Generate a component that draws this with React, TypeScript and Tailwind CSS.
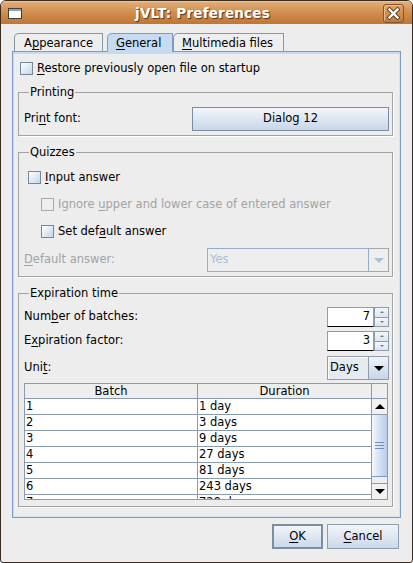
import React from 'react'

const U = ({ children }: { children: React.ReactNode }) => <span className="underline underline-offset-2">{children}</span>

function Check({ disabled }: { disabled?: boolean }) {
  return (
    <div
      className={
        disabled
          ? 'w-[13px] h-[13px] shrink-0 border border-[#a9a9a9] bg-[#eeeeee]'
          : 'w-[13px] h-[13px] shrink-0 border border-[#77879b] bg-gradient-to-br from-white to-[#c3d5eb]'
      }
    />
  )
}

function Spinner({ value }: { value: string }) {
  return (
    <div className="flex w-[62px] h-[20px]">
      <div className="flex-1 bg-white border border-[#8e9cad] border-b-black flex items-center justify-end pr-[3px]">{value}</div>
      <div className="w-[15px] flex flex-col">
        <div className="flex-1 border border-[#8e9cad] border-b-0 bg-gradient-to-b from-[#f4f7fb] to-[#dce5f0] flex items-center justify-center">
          <div className="w-0 h-0 border-x-[2px] border-x-transparent border-b-[2px] border-b-[#777]" />
        </div>
        <div className="flex-1 border border-[#8e9cad] bg-gradient-to-b from-[#f4f7fb] to-[#dce5f0] flex items-center justify-center">
          <div className="w-0 h-0 border-x-[2px] border-x-transparent border-t-[2px] border-t-[#777]" />
        </div>
      </div>
    </div>
  )
}

const rows = [
  ['1', '1 day'],
  ['2', '3 days'],
  ['3', '9 days'],
  ['4', '27 days'],
  ['5', '81 days'],
  ['6', '243 days'],
  ['7', '729 days'],
]

export default function App() {
  return (
    <div className="w-[413px] h-[563px] flex flex-col bg-[#ededed] border border-[#3a2c20] rounded-t-[6px] rounded-b-[3px] overflow-hidden font-['DejaVu_Sans',sans-serif] text-[11.5px] text-black">
      {/* title bar */}
      <div className="h-[23px] shrink-0 flex items-center px-[7px] bg-gradient-to-b from-[#e2ad76] via-[#cf8d4c] to-[#bf7636] border-t border-t-[#f0c596]">
        <div className="w-[14px] h-[11px] border border-[#3f3f3f] bg-white flex flex-col">
          <div className="h-[2px] bg-[#8fa0b8]" />
        </div>
        <div className="flex-1 text-center text-white font-bold text-[13.5px] [text-shadow:1px_1px_1px_#5a3414] tracking-[0.2px]">jVLT: Preferences</div>
        <div className="w-[21px] h-[19px] mr-[1px] rounded-[3px] border border-[#8a5324] bg-gradient-to-b from-[#dea36a] to-[#c27a3b] shadow-[inset_1px_1px_0_#ebbd8c] flex items-center justify-center">
          <svg width="13" height="13" viewBox="0 0 13 13">
            <path d="M2.5 2.5 L10.5 10.5 M10.5 2.5 L2.5 10.5" stroke="#5a3a1e" strokeWidth="4.2" strokeLinecap="square" />
            <path d="M2.5 2.5 L10.5 10.5 M10.5 2.5 L2.5 10.5" stroke="#ffffff" strokeWidth="2.4" strokeLinecap="square" />
          </svg>
        </div>
      </div>

      {/* body */}
      <div className="flex-1 flex flex-col px-[11px] pt-[9px]">
        {/* tabs */}
        <div className="h-[18px] flex items-end pl-[2px]">
          <div className="w-[89px] h-[18px] border border-b-0 border-[#8796a8] rounded-tl-[5px] bg-[#eeeeee] pl-[9px] pt-[1px] leading-[16px]">
            A<U>p</U>pearance
          </div>
          <div className="w-[66px] h-[19px] ml-[4px] -mb-[1px] border border-b-0 border-[#7f9bc6] rounded-tl-[5px] bg-[#c6dbf1] pl-[8px] pt-[1px] leading-[16px] z-10">
            <U>G</U>eneral
          </div>
          <div className="w-[111px] h-[18px] border border-b-0 border-[#8796a8] rounded-tl-[5px] bg-[#eeeeee] pl-[8px] pt-[1px] leading-[16px]">
            <U>M</U>ultimedia files
          </div>
        </div>

        {/* panel */}
        <div className="h-[467px] border border-[#7f9bc6] shadow-[inset_1px_1px_0_#c6dbf1,inset_-1px_-1px_0_#d4e2f2] flex flex-col pl-[5px] pr-[7px]">
          <div className="h-[2px] -ml-[5px] -mr-[7px] bg-[#c6dbf1]" />
          <div className="flex items-center gap-[4px] pl-[2px] mt-[8px] h-[13px]">
            <Check />
            <span><U>R</U>estore previously open file on startup</span>
          </div>

          <fieldset className="mt-[10px] border border-[#a2a2a2] shadow-[1px_1px_0_#ffffff] pl-[5px] pr-[3px] pb-[4px]">
            <legend className="ml-[5px] px-[1px] leading-[14px]">Printing</legend>
            <div className="flex items-center justify-between mt-[8px]">
              <span>Pri<U>n</U>t font:</span>
              <div className="w-[197px] h-[24px] border border-[#7b8da3] bg-gradient-to-b from-[#f3f6fa] to-[#c8d7e9] flex items-center justify-center">
                Dialog 12
              </div>
            </div>
          </fieldset>

          <fieldset className="mt-[9px] border border-[#a2a2a2] shadow-[1px_1px_0_#ffffff] pl-[5px] pr-[3px] pb-[4px]">
            <legend className="ml-[5px] px-[1px] leading-[14px]">Quizzes</legend>
            <div className="flex flex-col pt-[5px]">
              <div className="h-[27px] flex items-center gap-[4px] pl-[4px]">
                <Check />
                <span><U>I</U>nput answer</span>
              </div>
              <div className="h-[27px] flex items-center gap-[4px] pl-[17px] text-[#a3a3a3]">
                <Check disabled />
                <span>Ignore <U>u</U>pper and lower case of entered answer</span>
              </div>
              <div className="h-[27px] flex items-center gap-[4px] pl-[17px]">
                <Check />
                <span>Set def<U>a</U>ult answer</span>
              </div>
              <div className="flex items-center justify-between mt-[3px]">
                <span className="text-[#a3a3a3]"><U>D</U>efault answer:</span>
                <div className="w-[182px] h-[24px] flex">
                  <div className="flex-1 border border-[#94aed0] bg-[#eeeeee] text-[#a9c0dc] flex items-center pl-[2px]">Yes</div>
                  <div className="w-[20px] border border-l-0 border-[#a6a6a6] bg-[#eeeeee] flex items-center justify-center">
                    <div className="w-0 h-0 border-x-[5px] border-x-transparent border-t-[5px] border-t-[#a9c0dc]" />
                  </div>
                </div>
              </div>
            </div>
          </fieldset>

          <fieldset className="mt-[9px] border border-[#a2a2a2] shadow-[1px_1px_0_#ffffff] pl-[5px] pr-[3px] pb-[6px]">
            <legend className="ml-[5px] px-[1px] leading-[14px]">Expiration time</legend>
            <div className="flex items-center justify-between mt-[7px]">
              <span>Num<U>b</U>er of batches:</span>
              <Spinner value="7" />
            </div>
            <div className="flex items-center justify-between mt-[4px]">
              <span>E<U>x</U>piration factor:</span>
              <Spinner value="3" />
            </div>
            <div className="flex items-center justify-between mt-[5px]">
              <span>Uni<U>t</U>:</span>
              <div className="w-[62px] h-[24px] flex">
                <div className="flex-1 border border-[#8e9cad] bg-[#e6ebf1] shadow-[inset_1px_1px_0_#fff] flex items-center pl-[2px]">Days</div>
                <div className="w-[20px] border border-l-0 border-[#8e9cad] bg-gradient-to-b from-[#f0f4f9] to-[#c6d6ea] flex items-center justify-center">
                  <div className="w-0 h-0 border-x-[5px] border-x-transparent border-t-[5px] border-t-black" />
                </div>
              </div>
            </div>

            {/* table */}
            <div className="mt-[3px] w-[364px] h-[117px] border border-[#8b9bae] flex overflow-hidden">
              <div className="w-[346px] flex flex-col">
                <div className="h-[15px] shrink-0 flex bg-[#eeeeee] border-b border-[#8b9bae] leading-[14px]">
                  <div className="w-[173px] text-center border-r border-[#8b9bae]">Batch</div>
                  <div className="flex-1 text-center">Duration</div>
                </div>
                {rows.map(([b, d]) => (
                  <div key={b} className="h-[16px] shrink-0 flex bg-white border-b border-[#8b9bae] leading-[15px]">
                    <div className="w-[173px] pl-[1px] border-r border-[#8b9bae]">{b}</div>
                    <div className="flex-1 pl-[1px]">{d}</div>
                  </div>
                ))}
              </div>
              <div className="flex-1 flex flex-col border-l border-[#8b9bae] bg-[#eeeeee]">
                <div className="h-[15px] shrink-0 border-b border-[#8b9bae]" />
                <div className="h-[16px] shrink-0 border-b border-[#8b9bae] bg-[#f2f2f2] flex items-center justify-center">
                  <div className="w-0 h-0 border-x-[5px] border-x-transparent border-b-[5px] border-b-black" />
                </div>
                <div className="h-[62px] shrink-0 border-b border-[#7f9bc6] bg-gradient-to-r from-[#f4f8fd] via-[#d4e2f3] to-[#b7cce8] flex flex-col items-center justify-center gap-[2px]">
                  <div className="w-[9px] h-px bg-[#6f8fbd]" />
                  <div className="w-[9px] h-px bg-[#6f8fbd]" />
                  <div className="w-[9px] h-px bg-[#6f8fbd]" />
                </div>
                <div className="flex-1" />
                <div className="h-[16px] shrink-0 border-t border-[#8b9bae] bg-[#f2f2f2] flex items-center justify-center">
                  <div className="w-0 h-0 border-x-[5px] border-x-transparent border-t-[5px] border-t-black" />
                </div>
              </div>
            </div>
          </fieldset>
        </div>

        {/* buttons */}
        <div className="mt-[6px] flex justify-end gap-[4px] pr-[2px]">
          <div className="w-[51px] h-[25px] border-2 border-[#7b8ea4] bg-gradient-to-b from-[#f2f5f9] to-[#cbd9ea] flex items-center justify-center">
            <span><U>O</U>K</span>
          </div>
          <div className="w-[72px] h-[25px] border border-[#8c9db2] bg-gradient-to-b from-[#f2f5f9] to-[#cbd9ea] flex items-center justify-center">
            <span><U>C</U>ancel</span>
          </div>
        </div>
      </div>
    </div>
  )
}
